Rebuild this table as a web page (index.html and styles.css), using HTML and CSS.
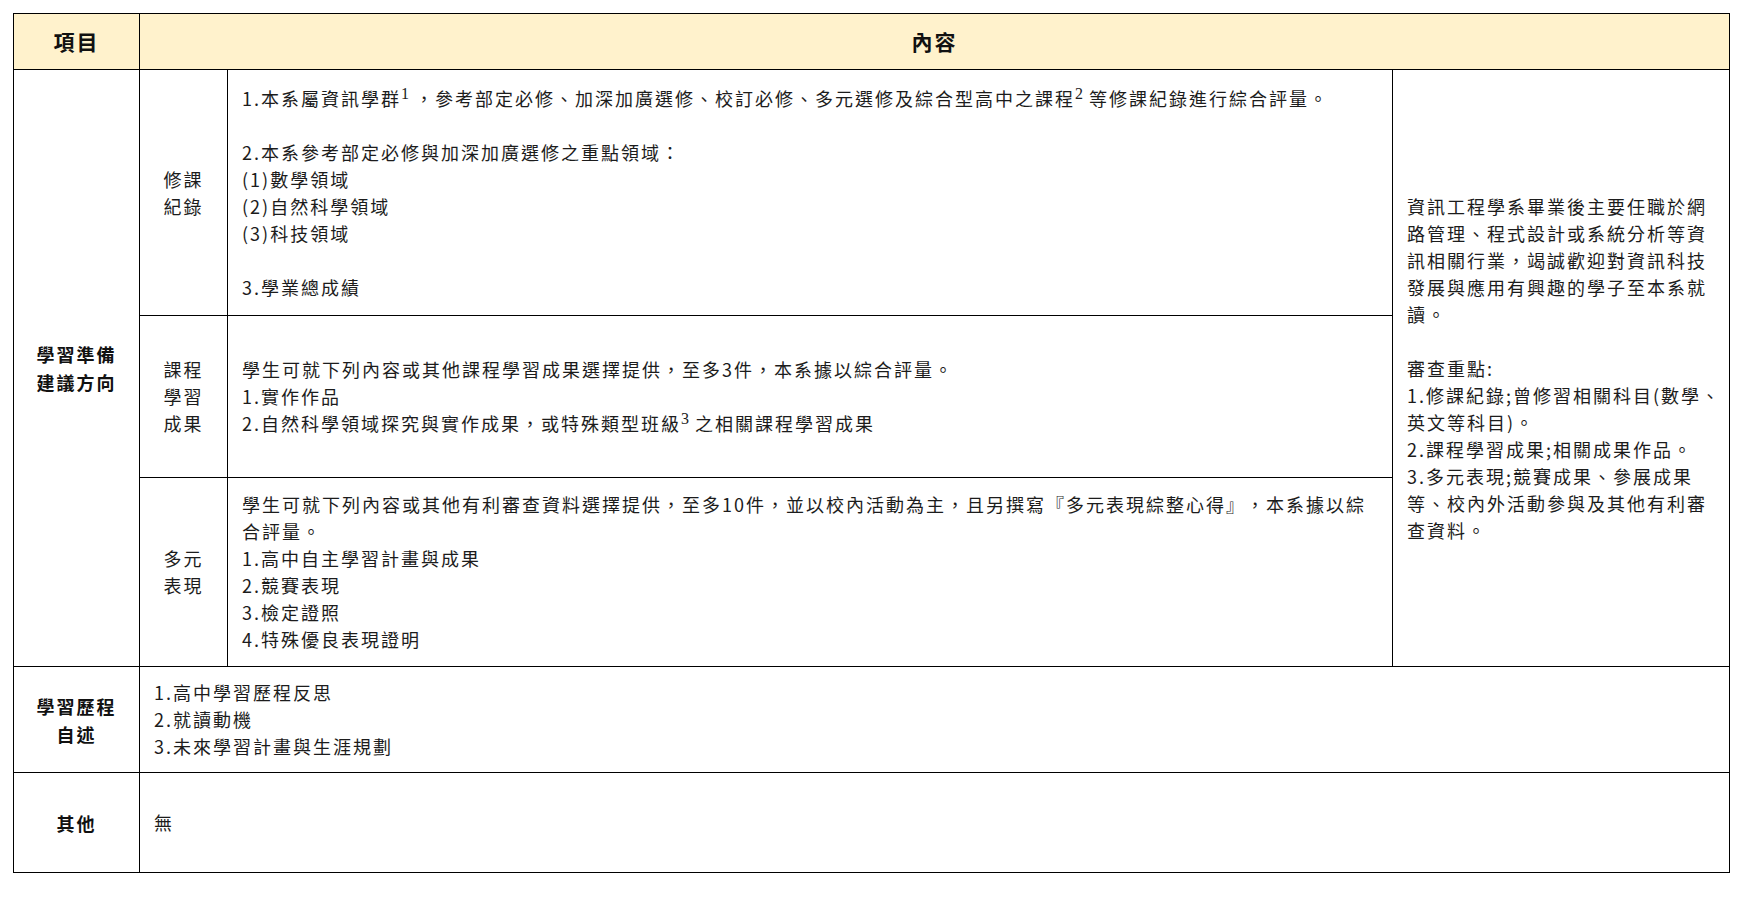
FILE: index.html
```html
<!DOCTYPE html>
<html lang="zh-Hant">
<head>
<meta charset="utf-8">
<title>資訊工程學系 審查資料參採</title>
<link rel="stylesheet" href="styles.css">
</head>
<body>
<div class="page">
  <table class="grid">
    <colgroup>
      <col class="c-item">
      <col class="c-sub">
      <col class="c-main">
      <col class="c-note">
    </colgroup>
    <tr class="r-head">
      <th class="head">項目</th>
      <th class="head" colspan="3">內容</th>
    </tr>
    <tr class="r-1">
      <td class="label" rowspan="3">學習準備<br>建議方向</td>
      <td class="sub">修課<br>紀錄</td>
      <td class="body">1.本系屬資訊學群<span class="sup">1</span> ，參考部定必修、加深加廣選修、校訂必修、多元選修及綜合型高中之課程<span class="sup">2</span> 等修課紀錄進行綜合評量。<br><br>2.本系參考部定必修與加深加廣選修之重點領域：<br>(1)數學領域<br>(2)自然科學領域<br>(3)科技領域<br><br>3.學業總成績</td>
      <td class="note" rowspan="3">資訊工程學系畢業後主要任職於網路管理、程式設計或系統分析等資訊相關行業，竭誠歡迎對資訊科技發展與應用有興趣的學子至本系就讀。<br><br>審查重點:<br>1.修課紀錄;曾修習相關科目(數學、英文等科目)。<br>2.課程學習成果;相關成果作品。<br>3.多元表現;競賽成果、參展成果等、校內外活動參與及其他有利審查資料。</td>
    </tr>
    <tr class="r-2">
      <td class="sub">課程<br>學習<br>成果</td>
      <td class="body">學生可就下列內容或其他課程學習成果選擇提供，至多3件，本系據以綜合評量。<br>1.實作作品<br>2.自然科學領域探究與實作成果，或特殊類型班級<span class="sup">3</span> 之相關課程學習成果</td>
    </tr>
    <tr class="r-3">
      <td class="sub">多元<br>表現</td>
      <td class="body">學生可就下列內容或其他有利審查資料選擇提供，至多10件，並以校內活動為主，且另撰寫『多元表現綜整心得』，本系據以綜合評量。<br>1.高中自主學習計畫與成果<br>2.競賽表現<br>3.檢定證照<br>4.特殊優良表現證明</td>
    </tr>
    <tr class="r-4">
      <td class="label">學習歷程<br>自述</td>
      <td class="body" colspan="3">1.高中學習歷程反思<br>2.就讀動機<br>3.未來學習計畫與生涯規劃</td>
    </tr>
    <tr class="r-5">
      <td class="label">其他</td>
      <td class="body" colspan="3">無</td>
    </tr>
  </table>
</div>
</body>
</html>
```

FILE: styles.css
```css
html, body {
  margin: 0;
  padding: 0;
  background: #ffffff;
}

.page {
  padding: 13px 0 0 13px;
}

.grid {
  border-collapse: collapse;
  table-layout: fixed;
  width: 1717px;
  font-family: "Noto Sans CJK TC", "Noto Sans", sans-serif;
  font-size: 18px;
  letter-spacing: 2px;
  line-height: 27px;
  color: #1c1c1c;
  text-spacing-trim: space-all;
}

.c-item { width: 126px; }
.c-sub { width: 88px; }
.c-main { width: 1165px; }
.c-note { width: 337px; }

.grid th,
.grid td {
  border: 1px solid #000000;
  padding: 0;
  vertical-align: middle;
}

.r-head { height: 56px; }
.r-1 { height: 246px; }
.r-2 { height: 162px; }
.r-3 { height: 189px; }
.r-4 { height: 106px; }
.r-5 { height: 100px; }

.head {
  background: #fff2cc;
  font-size: 21px;
  font-weight: 700;
  letter-spacing: 2px;
  text-align: center;
  color: #111111;
}

.label {
  font-weight: 700;
  text-align: center;
  line-height: 28px;
  color: #111111;
}

.sub {
  text-align: center;
}

.body {
  padding: 0 14px 0 14px !important;
  text-align: left;
}

.note {
  padding: 0 5px 0 14px !important;
  text-align: left;
}

.sup {
  font-family: "Liberation Serif", serif;
  font-size: 16px;
  letter-spacing: 0;
  vertical-align: super;
  line-height: 0;
}
```
